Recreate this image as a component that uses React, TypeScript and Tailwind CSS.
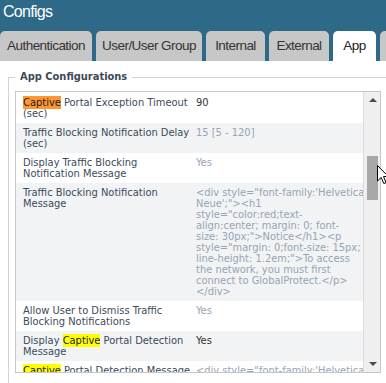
import React from "react";

const tabs = [
  { label: "Authentication", w: "w-[92px]" },
  { label: "User/User Group", w: "w-[106px]" },
  { label: "Internal", w: "w-[59px]" },
  { label: "External", w: "w-[60px]" },
  { label: "App", w: "w-[43px]", active: true },
  { label: "Clientless VPN", w: "w-[110px]" },
];

function Mark({ children, active }: { children: React.ReactNode; active?: boolean }) {
  return (
    <span className={active ? "bg-[#ff9632] text-[#222]" : "bg-[#ffff00] text-[#222]"}>{children}</span>
  );
}

type Row = {
  label: React.ReactNode[];
  value: string[];
  dark?: boolean;
};

const rows: Row[] = [
  {
    label: [
      <>
        <Mark active>Captive</Mark> Portal Exception Timeout
      </>,
      "(sec)",
    ],
    value: ["90"],
    dark: true,
  },
  { label: ["Traffic Blocking Notification Delay", "(sec)"], value: ["15 [5 - 120]"] },
  { label: ["Display Traffic Blocking", "Notification Message"], value: ["Yes"] },
  {
    label: ["Traffic Blocking Notification", "Message"],
    value: [
      "<div style=\"font-family:'Helvetica",
      "Neue';\"><h1",
      "style=\"color:red;text-",
      "align:center; margin: 0; font-",
      "size: 30px;\">Notice</h1><p",
      "style=\"margin: 0;font-size: 15px;",
      "line-height: 1.2em;\">To access",
      "the network, you must first",
      "connect to GlobalProtect.</p>",
      "</div>",
    ],
  },
  { label: ["Allow User to Dismiss Traffic", "Blocking Notifications"], value: ["Yes"] },
  {
    label: [
      <>
        Display <Mark>Captive</Mark> Portal Detection
      </>,
      "Message",
    ],
    value: ["Yes"],
    dark: true,
  },
  {
    label: [
      <>
        <Mark>Captive</Mark> Portal Detection Message
      </>,
    ],
    value: ["<div style=\"font-family:'Helvetica"],
  },
];

export default function App() {
  return (
    <div className="relative w-[386px] h-[383px] overflow-hidden bg-white font-['Liberation_Sans',Arial,sans-serif]">
      {/* header + tabs */}
      <div className="bg-[#2e6a88] h-[61px] w-[500px]">
        <div className="h-[31px] pl-[3px] pt-[3px] text-white text-[16px] leading-[18px] tracking-[-0.7px]">
          Configs
        </div>
        <div className="flex gap-[4px] h-[30px]">
          {tabs.map((t, i) => (
            <div
              key={t.label}
              className={`${t.w} shrink-0 h-[30px] rounded-t-[5px] flex items-center whitespace-nowrap text-[13.5px] tracking-[-0.55px] ${
                i === 5 ? "justify-start pl-[14px]" : "justify-center"
              } ${t.active ? "bg-white text-[#222]" : "bg-[#c7c7c7] text-[#333]"}`}
            >
              {t.label}
            </div>
          ))}
        </div>
      </div>

      <div className="pl-[8px] pt-[9px]">
        <fieldset className="w-[420px] h-[360px] border border-[#d2d2d2] px-[6px] pt-[7px]">
          <legend className="px-[5px] text-[11px] font-bold text-[#3b4a5a] leading-[14px] font-['DejaVu_Sans_Condensed','Liberation_Sans',sans-serif]">
            App Configurations
          </legend>
          <div className="w-[366px] h-[282px] border border-[#c6c6c6] flex font-['DejaVu_Sans_Condensed','Liberation_Sans',sans-serif] text-[11px] leading-[11px]">
            <div className="flex-1 overflow-hidden pt-[1px]">
              {rows.map((r, i) => (
                <div key={i} className={`flex py-[4px] ${i % 2 === 1 ? "bg-[#f1f3f5]" : "bg-white"}`}>
                  <div className="w-[176px] shrink-0 pl-[7px] text-[#3b4b5c] whitespace-nowrap">
                    {r.label.map((l, j) => (
                      <div key={j}>{l}</div>
                    ))}
                  </div>
                  <div className={`flex-1 pl-[4px] whitespace-nowrap ${r.dark ? "text-[#333]" : "text-[#97a5b4]"}`}>
                    {r.value.map((v, j) => (
                      <div key={j}>{v}</div>
                    ))}
                  </div>
                </div>
              ))}
            </div>
            <div className="relative w-[17px] shrink-0 bg-[#efefef] border-l border-[#dcdcdc]">
              <div className="absolute left-[5px] top-[6px] w-0 h-0 border-l-[4px] border-r-[4px] border-b-[4px] border-l-transparent border-r-transparent border-b-[#4a4a4a]" />
              <div className="absolute left-[3px] top-[64px] w-[11px] h-[44px] bg-[#a8a8a8]" />
              <div className="absolute left-[5px] bottom-[6px] w-0 h-0 border-l-[4px] border-r-[4px] border-t-[4px] border-l-transparent border-r-transparent border-t-[#4a4a4a]" />
            </div>
          </div>
        </fieldset>
      </div>

      {/* mouse pointer */}
      <svg className="absolute left-[377px] top-[165px]" width="12" height="20" viewBox="0 0 12 20">
        <path d="M0.5 0.5 L0.5 16 L4.2 12.4 L6.8 18.6 L9 17.6 L6.5 11.5 L11.3 11.5 Z" fill="#fff" stroke="#000" strokeWidth="1" />
      </svg>
    </div>
  );
}
